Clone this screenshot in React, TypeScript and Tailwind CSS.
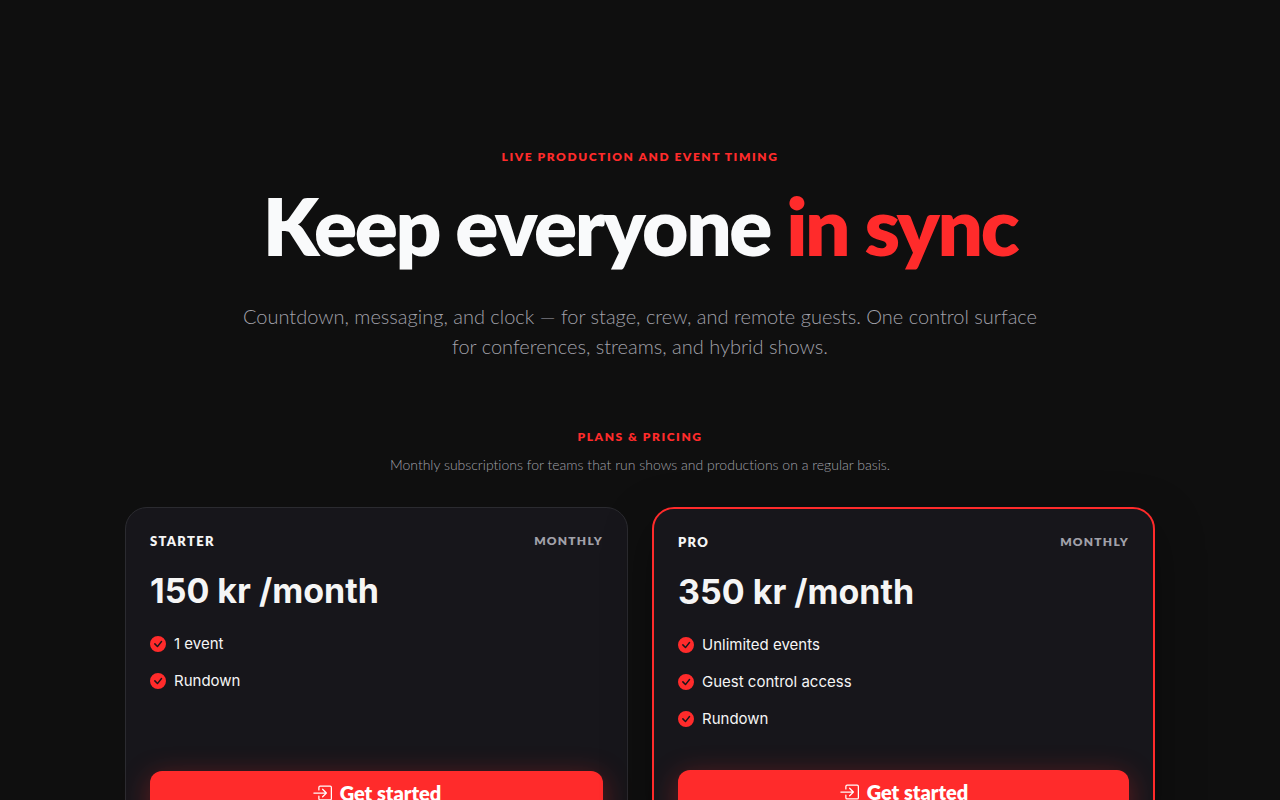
import clsx from "clsx";
import { BsBoxArrowInRight, BsCheckCircleFill } from "react-icons/bs";

type Plan = {
  id: string;
  name: string;
  interval: string;
  price: string;
  features: string[];
  featured?: boolean;
};

const plans: Plan[] = [
  {
    id: "starter",
    name: "Starter",
    interval: "Monthly",
    price: "150 kr /month",
    features: ["1 event", "Rundown"],
  },
  {
    id: "pro",
    name: "Pro",
    interval: "Monthly",
    price: "350 kr /month",
    features: ["Unlimited events", "Guest control access", "Rundown"],
    featured: true,
  },
];

const eyebrow =
  "text-xs font-extrabold uppercase leading-4 tracking-[0.13em] text-[#ff2b2b]";

function Hero() {
  return (
    <header className="flex w-full max-w-[820px] flex-col items-center text-center">
      <p className={eyebrow}>Live production and event timing</p>
      <h1 className="mt-5 text-[80px] font-extrabold leading-[80px] tracking-[-0.03em] text-[#f9fafb]">
        Keep everyone <span className="text-[#ff2b2b]">in sync</span>
      </h1>
      <p className="mt-9 text-xl font-light leading-[30px] text-[#a1a1aa]">
        Countdown, messaging, and clock — for stage, crew, and remote guests.
        One control surface for conferences, streams, and hybrid shows.
      </p>
    </header>
  );
}

function PlanCard({ plan }: { plan: Plan }) {
  return (
    <article
      className={clsx(
        "flex flex-col rounded-[22px] bg-[#17161b] p-6",
        plan.featured
          ? "border-2 border-[#ff2b2b] shadow-[0_16px_48px_rgba(0,0,0,0.35)]"
          : "border border-[#2b2b30]",
      )}
    >
      <div className="flex items-center justify-between">
        <h3 className="text-[13px] font-extrabold uppercase leading-[18px] tracking-[0.1em] text-[#f5f5f5]">
          {plan.name}
        </h3>
        <span className="text-xs font-extrabold uppercase leading-4 tracking-[0.1em] text-[#a1a1aa]">
          {plan.interval}
        </span>
      </div>
      <p className="mt-5 font-[Inter,sans-serif] text-[34px] font-bold leading-[42px] text-[#f5f5f5]">
        {plan.price}
      </p>
      <ul className="mt-[19px] mb-[39px] flex flex-col gap-3 font-[Inter,sans-serif] text-[15px] leading-[25px] text-[#f5f5f5]">
        {plan.features.map((feature) => (
          <li key={feature} className="flex items-center gap-2">
            <BsCheckCircleFill className="size-4 shrink-0 text-[#ff2b2b]" aria-hidden />
            {feature}
          </li>
        ))}
      </ul>
      <button
        type="button"
        className="mt-auto flex w-full items-center justify-center gap-2 rounded-xl bg-[#ff2b2b] py-2 text-xl font-extrabold leading-7 text-white shadow-[0_6px_28px_rgba(255,43,43,0.35)]"
      >
        <BsBoxArrowInRight className="size-5" aria-hidden />
        Get started
      </button>
    </article>
  );
}

function Pricing() {
  return (
    <section
      className="mt-[68px] flex w-full max-w-[1030px] flex-col items-center"
      aria-labelledby="pricing-title"
    >
      <h2 id="pricing-title" className={eyebrow}>
        Plans &amp; pricing
      </h2>
      <p className="mt-2 text-center text-sm font-light leading-6 text-[#a1a1aa] [font-variant-ligatures:none]">
        Monthly subscriptions for teams that run shows and productions on a
        regular basis.
      </p>
      <div className="mt-[30px] grid w-full grid-cols-1 gap-6 md:grid-cols-2">
        {plans.map((plan) => (
          <PlanCard key={plan.id} plan={plan} />
        ))}
      </div>
    </section>
  );
}

export default function App() {
  return (
    <main className="flex min-h-screen w-full flex-col items-center bg-[#0f0f0f] px-5 pt-[149px] pb-20 font-[Lato,sans-serif]">
      <Hero />
      <Pricing />
    </main>
  );
}
